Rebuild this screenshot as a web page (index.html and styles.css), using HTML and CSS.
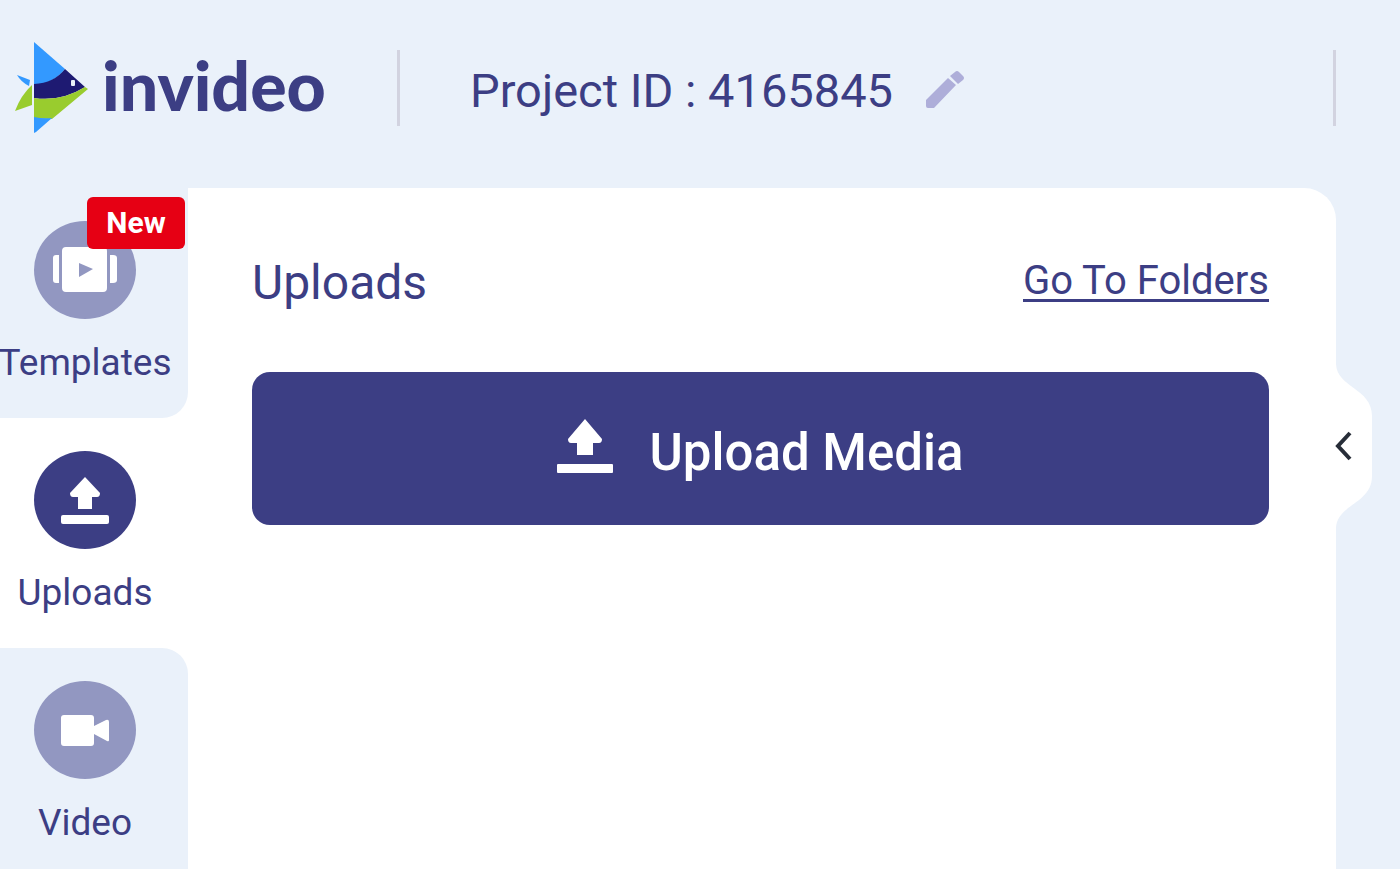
FILE: index.html
```html
<!DOCTYPE html>
<html lang="en">
<head>
    <meta charset="UTF-8">
    <meta name="viewport" content="width=device-width, initial-scale=1.0">
    <title>InVideo - Uploads</title>
    <link rel="stylesheet" href="styles.css">
</head>
<body>
    <header class="header">
        <a class="logo" href="#">
            <svg class="logo-mark" viewBox="0 0 76 94" aria-hidden="true">
                <path fill="#3399ff" d="M20 1 L51 28 Q39 43 20 44 Z"/>
                <path fill="#1e1a72" d="M51 28 L71 46 Q47 61 20 57 V43 Q40 42 51 28 Z"/>
                <path fill="#99cc2e" d="M71 46 L74 48 L38 78 Q29 78 20 77 V57 Q47 61 71 46 Z"/>
                <path fill="#3399ff" d="M20 76 Q29 78 38 77 L22 91 L20 92 Z"/>
                <path fill="#3399ff" d="M3 34 L16 39 L15 45 Q7 41 3 34 Z"/>
                <path fill="#99cc2e" d="M18 44 V64 L1 70 Q7 54 18 44 Z"/>
                <rect fill="#eaf1fa" x="57" y="39" width="4" height="6" rx="1"/>
            </svg>
            <span class="logo-text">invideo</span>
        </a>
        <div class="project">
            <span class="project-id">Project ID : 4165845</span>
            <button class="edit-btn" type="button" aria-label="Edit project name">
                <svg viewBox="0 0 40 40" width="40" height="40" aria-hidden="true">
                    <path fill="#aeaed9" d="M1 30 L23 8 L31 15 L9 38 H3 Q1 38 1 36 Z M25 6 L30 2 Q32 0 34 2 L38 6 Q40 8 38 10 L33 14 Z"/>
                </svg>
            </button>
        </div>
    </header>

    <div class="workspace">
        <nav class="sidebar">
            <a class="tab tab-before" href="#">
                <span class="tab-icon">
                    <svg viewBox="0 0 66 48" width="66" height="48" aria-hidden="true">
                        <path fill="#fff" d="M14 1 H51 Q55 1 55 5 V42 Q55 46 51 46 H14 Q10 46 10 42 V5 Q10 1 14 1 Z M1 12 Q1 9 4 9 H7 V37 H4 Q1 37 1 34 Z M58 9 H61 Q65 9 65 12 V34 Q65 37 61 37 H58 Z"/>
                        <path fill="#9297c1" d="M27 17 L41 23 L27 31 Z"/>
                    </svg>
                </span>
                <span class="badge">New</span>
                <span class="tab-label">Templates</span>
            </a>
            <a class="tab active" href="#" aria-current="page">
                <span class="tab-icon">
                    <svg viewBox="0 0 50 50" width="50" height="50" aria-hidden="true">
                        <path fill="#fff" d="M25 2 L40 18 Q40 22 37 22 H32 V34 H18 V22 H13 Q10 22 10 18 Z"/>
                        <rect fill="#fff" x="1" y="40" width="48" height="9" rx="2"/>
                    </svg>
                </span>
                <span class="tab-label">Uploads</span>
            </a>
            <a class="tab tab-after" href="#">
                <span class="tab-icon">
                    <svg viewBox="0 0 50 32" width="50" height="32" aria-hidden="true">
                        <path fill="#fff" d="M4 1 H31 Q34 1 34 4 V12 L46 6 Q49 5 49 8 V26 Q49 28 47 27 L34 20 V29 Q34 32 31 32 H4 Q1 32 1 29 V4 Q1 1 4 1 Z"/>
                    </svg>
                </span>
                <span class="tab-label">Video</span>
            </a>
        </nav>

        <main class="panel">
            <div class="panel-head">
                <h1 class="panel-title">Uploads</h1>
                <a class="folders-link" href="#">Go To Folders</a>
            </div>
            <button class="upload-btn" type="button">
                <svg class="upload-icon" viewBox="0 0 56 56" width="56" height="56" aria-hidden="true">
                    <path fill="#fff" d="M28 1 L45 21 Q45 25 42 25 H36 V37 H20 V25 H14 Q11 25 11 21 Z"/>
                    <rect fill="#fff" x="0" y="46" width="56" height="9" rx="1"/>
                </svg>
                Upload Media
            </button>
            <button class="collapse-btn" type="button" aria-label="Collapse panel">
                <svg viewBox="0 0 40 164" width="40" height="164" aria-hidden="true">
                    <path fill="#fff" d="M0 0 H2 C3 24 38 24 38 52 V112 C38 140 3 140 2 164 H0 Z"/>
                    <path fill="none" stroke="#272d38" stroke-width="4" d="M16 69 L4 82 L16 95"/>
                </svg>
            </button>
        </main>
    </div>
</body>
</html>
```

FILE: styles.css
```css
* {
    box-sizing: border-box;
}
body {
    margin: 0;
    height: 100vh;
    overflow: hidden;
    display: flex;
    flex-direction: column;
    background: #eaf1fa;
    color: #3c3e84;
    font-family: Roboto, "Liberation Sans", sans-serif;
}
a {
    color: inherit;
    text-decoration: none;
}
button {
    border: none;
    padding: 0;
    background: none;
    color: inherit;
    font-family: inherit;
    cursor: pointer;
}
svg {
    display: block;
}

/* Header */
.header {
    flex: none;
    display: flex;
    align-items: center;
    height: 188px;
    padding: 0 64px 12px 14px;
}
.logo {
    display: flex;
    align-items: center;
    gap: 12px;
    width: 383px;
}
.logo-mark {
    width: 76px;
    height: 94px;
}
.logo-text {
    padding-bottom: 6px;
    font-family: Lato, sans-serif;
    font-size: 68px;
    font-weight: 900;
    line-height: 80px;
}
.project {
    flex: 1;
    display: flex;
    align-items: center;
    gap: 32px;
    height: 76px;
    padding-left: 70px;
    border-left: 3px solid #d2d3e0;
    border-right: 3px solid #d2d3e0;
}
.project-id {
    padding-top: 6px;
    font-size: 47px;
    line-height: 56px;
}
.edit-btn {
    padding-top: 4px;
}

/* Sidebar */
.workspace {
    flex: 1;
    display: flex;
    min-height: 0;
}
.sidebar {
    flex: none;
    width: 188px;
    background: #fff;
}
.tab {
    position: relative;
    display: flex;
    flex-direction: column;
    align-items: center;
    gap: 22px;
    height: 230px;
    padding: 33px 18px 0 0;
    background: #eaf1fa;
}
.tab-before {
    border-bottom-right-radius: 26px;
}
.tab-after {
    border-top-right-radius: 26px;
}
.tab.active {
    background: #fff;
}
.tab-icon {
    display: flex;
    align-items: center;
    justify-content: center;
    width: 102px;
    height: 98px;
    border-radius: 50%;
    background: #9297c1;
}
.tab.active .tab-icon {
    background: #3c3e84;
}
.tab-label {
    font-size: 37px;
    line-height: 44px;
}
.badge {
    position: absolute;
    top: 9px;
    right: 3px;
    width: 98px;
    border-radius: 6px;
    background: #e60014;
    color: #fff;
    font-size: 30px;
    font-weight: 700;
    line-height: 52px;
    text-align: center;
}

/* Uploads panel */
.panel {
    position: relative;
    flex: 1;
    margin-right: 64px;
    padding: 64px 67px 0 64px;
    background: #fff;
    border-top-right-radius: 32px;
}
.panel-head {
    display: flex;
    align-items: center;
    justify-content: space-between;
    height: 60px;
    margin-bottom: 60px;
}
.panel-title {
    margin: 0;
    font-size: 48px;
    font-weight: 400;
}
.folders-link {
    border-bottom: 3px solid #3c3e84;
    font-size: 40px;
    line-height: 36px;
}
.upload-btn {
    display: flex;
    align-items: center;
    justify-content: center;
    gap: 36px;
    width: 100%;
    height: 153px;
    padding-top: 8px;
    border-radius: 18px;
    background: #3c3e84;
    color: #fff;
    font-size: 51px;
    font-weight: 500;
}
.upload-icon {
    margin-bottom: 14px;
}
.collapse-btn {
    position: absolute;
    top: 176px;
    right: -38px;
}
```
